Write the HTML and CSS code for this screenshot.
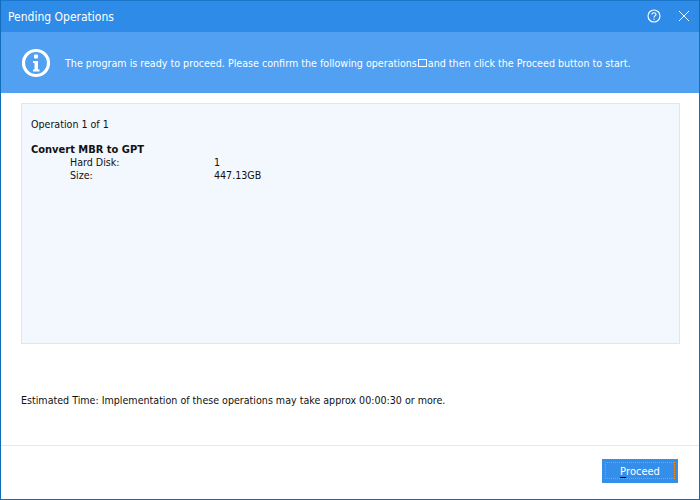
FILE: index.html
```html
<!DOCTYPE html>
<html lang="en">
<head>
<meta charset="utf-8">
<title>Pending Operations</title>
<link rel="stylesheet" href="styles.css">
</head>
<body>
<div class="window">
  <header class="titlebar">
    <span class="title">Pending Operations</span>
    <div class="controls">
      <svg class="icon" width="14" height="14" viewBox="0 0 14 14" fill="none" stroke="#fff" stroke-width="1.1">
        <circle cx="7" cy="7" r="6"/>
        <path d="M5 5.6c0-1.2.9-1.9 2-1.9s2 .7 2 1.7c0 1.5-2 1.5-2 3"/>
        <path d="M7 9.4v1.3"/>
      </svg>
      <svg class="icon" width="12" height="12" viewBox="0 0 12 12" fill="none" stroke="#fff" stroke-width="1">
        <path d="M1 1l10 10M11 1L1 11"/>
      </svg>
    </div>
  </header>
  <section class="banner">
    <svg class="info" width="30" height="30" viewBox="0 0 30 30">
      <circle cx="15" cy="15" r="12.5" fill="none" stroke="#fff" stroke-width="3.2"/>
      <rect x="13" y="6.5" width="4" height="4" rx="1" fill="#fff"/>
      <path d="M12 13h5v8.5h1.5v2h-6.5v-2h1.5v-6.5h-1.5z" fill="#fff"/>
    </svg>
    <p class="message">The program is ready to proceed. Please confirm the following operations<span class="box"></span>and then click the Proceed button to start.</p>
  </section>
  <main class="content">
    <section class="panel">
      <p class="op-count">Operation 1 of 1</p>
      <h2 class="op-name">Convert MBR to GPT</h2>
      <dl class="details">
        <dt>Hard Disk:</dt><dd>1</dd>
        <dt>Size:</dt><dd>447.13GB</dd>
      </dl>
    </section>
    <p class="estimate">Estimated Time: Implementation of these operations may take approx 00:00:30 or more.</p>
  </main>
  <footer class="footer">
    <button class="proceed"><span class="focus"><u>P</u>roceed</span></button>
  </footer>
</div>
</body>
</html>
```

FILE: styles.css
```css
* { box-sizing: border-box; }
html, body { margin: 0; padding: 0; background: #fff; }
body {
  width: 700px;
  height: 500px;
  overflow: hidden;
  font-family: "DejaVu Sans Condensed", "DejaVu Sans", sans-serif;
  font-stretch: condensed;
  font-size: 10.6px;
  color: #111;
}
.window {
  width: 700px;
  height: 500px;
  display: flex;
  flex-direction: column;
  border: 1px solid #0f6db9;
  border-top: 0;
}
.titlebar {
  height: 32px;
  flex: none;
  background: #2e8ce8;
  border-top: 1px solid #1a78cc;
  display: flex;
  align-items: center;
  justify-content: space-between;
  padding: 0 9px 0 7px;
  color: #fff;
}
.title { font-size: 12px; }
.controls { display: flex; align-items: center; gap: 17px; margin-bottom: 2px; }
.icon { display: block; }
.banner {
  height: 61px;
  flex: none;
  background: #51a0f2;
  display: flex;
  align-items: center;
  padding-left: 20px;
  gap: 14px;
  color: #fff;
}
.message { margin: 0; padding-top: 1px; font-size: 10.64px; }
.box {
  display: inline-block;
  width: 9px;
  height: 8px;
  border: 1px solid #fff;
  margin: 0 1px 0 1px;
}
.content {
  flex: 1;
  display: flex;
  flex-direction: column;
  padding: 10px 19px 0 20px;
}
.panel {
  height: 241px;
  background: #f3f7fe;
  border: 1px solid #e0e5ef;
  padding: 14px 9px;
}
.op-count { margin: 0 0 12px; line-height: 13px; }
.op-name { margin: 0; font-size: 11px; font-weight: bold; line-height: 13px; }
.details {
  margin: 0;
  padding-left: 39px;
  display: grid;
  grid-template-columns: 144px auto;
  line-height: 13px;
}
.details dd { margin: 0; }
.estimate { margin: 50px 0 0; line-height: 13px; }
.footer {
  height: 54px;
  flex: none;
  border-top: 1px solid #e6e8ec;
  display: flex;
  justify-content: flex-end;
  padding: 13px 21px 0 0;
}
.proceed {
  width: 76px;
  height: 24px;
  padding: 3px 3px 4px;
  border: 0;
  background: #348eea;
  color: #fff;
  font: inherit;
  font-size: 11px;
}
.focus {
  display: flex;
  align-items: center;
  justify-content: center;
  height: 100%;
  padding-top: 1px;
  white-space: pre;
  background:
    linear-gradient(90deg, #f58a1f 50%, transparent 50%) left top / 2px 1px repeat-x,
    linear-gradient(90deg, #f58a1f 50%, transparent 50%) left bottom / 2px 1px repeat-x,
    linear-gradient(180deg, #f58a1f 50%, transparent 50%) left top / 1px 2px repeat-y,
    linear-gradient(180deg, #f58a1f 50%, transparent 50%) right top / 1px 2px repeat-y;
}
.focus u {
  text-decoration-color: #000;
  text-decoration-thickness: 1px;
  text-underline-offset: 2px;
}
```
